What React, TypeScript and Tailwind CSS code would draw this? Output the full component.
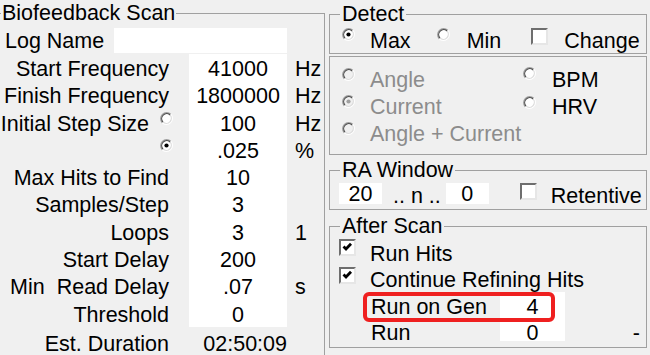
import React from "react";

type RadioProps = { checked?: boolean; disabled?: boolean; className?: string };

function Radio({ checked, disabled, className }: RadioProps) {
  return (
    <svg width="13" height="13" viewBox="0 0 13 13" className={"shrink-0 " + (className ?? "")}>
      <circle cx="6.5" cy="6.5" r="5.8" fill={disabled ? "#f0f0f0" : "#ffffff"} />
      <path d="M2.26 10.74A6 6 0 0 1 10.74 2.26" stroke="#a0a0a0" strokeWidth="1.2" fill="none" />
      <path d="M10.74 2.26A6 6 0 0 1 2.26 10.74" stroke="#ffffff" strokeWidth="1.2" fill="none" />
      <path d="M2.97 10.03A5 5 0 0 1 10.03 2.97" stroke="#505050" strokeWidth="1.2" fill="none" />
      <path d="M10.03 2.97A5 5 0 0 1 2.97 10.03" stroke="#dcdcdc" strokeWidth="1.2" fill="none" />
      {checked && <circle cx="6.5" cy="6.5" r="2.1" fill={disabled ? "#a0a0a0" : "#000000"} />}
    </svg>
  );
}

function Check({ checked, className }: { checked?: boolean; className?: string }) {
  return (
    <div
      className={
        "w-[17px] h-[17px] shrink-0 bg-white border-2 border-t-[#6e6e6e] border-l-[#6e6e6e] border-r-[#e6e6e6] border-b-[#e6e6e6] " +
        (className ?? "")
      }
    >
      {checked && (
        <svg width="13" height="13" viewBox="0 0 13 13">
          <polyline points="2.5,5.5 5,8 10,2.8" stroke="#000" strokeWidth="2.8" fill="none" />
        </svg>
      )}
    </div>
  );
}

interface ScanRow {
  label: string;
  value: string;
  unit?: string;
  radio?: "on" | "off";
}

const scanRows: ScanRow[] = [
  { label: "Start Frequency", value: "41000", unit: "Hz" },
  { label: "Finish Frequency", value: "1800000", unit: "Hz" },
  { label: "Initial Step Size", value: "100", unit: "Hz", radio: "off" },
  { label: "", value: ".025", unit: "%", radio: "on" },
  { label: "Max Hits to Find", value: "10" },
  { label: "Samples/Step", value: "3" },
  { label: "Loops", value: "3", unit: "1" },
  { label: "Start Delay", value: "200" },
  { label: "Min  Read Delay", value: ".07", unit: "s" },
  { label: "Threshold", value: "0" },
];

export default function App() {
  return (
    <div className="w-[650px] h-[355px] overflow-hidden bg-[#f0f0f0] flex items-start text-black text-[21.5px] font-['Liberation_Sans',Arial,sans-serif]">
      {/* Biofeedback Scan group */}
      <fieldset className="-ml-[12px] w-[337px] h-[380px] shrink-0 border border-[#a0a0a0] pl-[11px]">
        <legend className="ml-[1px] px-[1px] leading-[26px]">Biofeedback Scan</legend>
        <div className="pt-[2px]">
          <div className="flex h-[26px] items-start">
            <span className="w-[114px] pl-[5px] leading-[25px] pt-[1px]">Log Name</span>
            <div className="w-[173px] h-[25px] bg-white" />
          </div>

          {scanRows.map((row) => (
            <div key={row.label + row.value} className="flex h-[27.3px] leading-[27.3px]">
              {row.radio ? (
                <div className="w-[176px] flex justify-end items-start pr-[3px] pt-[2px] whitespace-pre">
                  <span>{row.label}</span>
                  <Radio checked={row.radio === "on"} className="ml-[11px] mt-[1px]" />
                </div>
              ) : (
                <div className="w-[176px] text-right pr-[7px] pt-[2px] whitespace-pre">{row.label}</div>
              )}
              <div className="ml-[13px] w-[98px] h-full bg-white text-center pt-[2px]">{row.value}</div>
              <div className="ml-[8px] pt-[2px]">{row.unit}</div>
            </div>
          ))}

          <div className="flex h-[27px] mt-[4px] leading-[27px]">
            <div className="w-[176px] text-right pr-[7px]">Est. Duration</div>
            <div className="ml-[13px] w-[98px] text-right">02:50:09</div>
          </div>
        </div>
      </fieldset>

      {/* Right column */}
      <div className="ml-[4px] w-[318px] shrink-0 flex flex-col">
        <fieldset className="border border-[#a0a0a0] pl-[12px]">
          <legend className="-ml-[2px] px-[2px] leading-[28px]">Detect</legend>
          <div className="flex h-[25px] items-start leading-[25px]">
            <Radio checked />
            <span className="ml-[15px] pt-[1px]">Max</span>
            <Radio className="ml-[26px]" />
            <span className="ml-[17px] pt-[1px]">Min</span>
            <Check className="ml-[30px]" />
            <span className="ml-[16px] pt-[1px]">Change</span>
          </div>
        </fieldset>

        <div className="mt-[2px] border border-[#a0a0a0] pl-[12px] pt-[10px] pb-[6px] grid grid-cols-[181px_1fr] text-[#8c8c8c]">
          <div className="flex h-[27px] items-start leading-[27px]">
            <Radio disabled className="mt-[1px]" />
            <span className="ml-[15px]">Angle</span>
          </div>
          <div className="flex h-[27px] items-start leading-[27px] text-black">
            <Radio className="mt-[0px]" />
            <span className="ml-[16px]">BPM</span>
          </div>
          <div className="flex h-[27px] items-start leading-[27px]">
            <Radio disabled checked className="mt-[1px]" />
            <span className="ml-[15px]">Current</span>
          </div>
          <div className="flex h-[27px] items-start leading-[27px] text-black">
            <Radio className="mt-[2px]" />
            <span className="ml-[16px]">HRV</span>
          </div>
          <div className="flex h-[27px] items-start leading-[27px]">
            <Radio disabled className="mt-[1px]" />
            <span className="ml-[15px]">Angle + Current</span>
          </div>
          <div />
        </div>

        <fieldset className="mt-[2px] border border-[#a0a0a0] pl-[9px] pb-[2px]">
          <legend className="ml-[1px] px-[2px] leading-[26px]">RA Window</legend>
          <div className="flex h-[24px] items-start leading-[24px]">
            <div className="w-[43px] h-[21px] bg-white text-center leading-[23px]">20</div>
            <span className="ml-[11px] pt-[1px]">.. n ..</span>
            <div className="ml-[5px] w-[43px] h-[21px] bg-white text-center leading-[23px]">0</div>
            <Check className="ml-[31px]" />
            <span className="ml-[14px] pt-[1px]">Retentive</span>
          </div>
        </fieldset>

        <fieldset className="mt-[2px] border border-[#a0a0a0] pl-[9px]">
          <legend className="ml-[1px] px-[2px] leading-[28px]">After Scan</legend>
          <div className="flex h-[26px] items-start leading-[26px]">
            <Check checked className="-mt-[1px]" />
            <span className="ml-[14px] pt-[1px]">Run Hits</span>
          </div>
          <div className="flex h-[26px] items-start leading-[26px]">
            <Check checked className="mt-[1px]" />
            <span className="ml-[14px] pt-[1px]">Continue Refining Hits</span>
          </div>
          <div className="relative flex h-[28px] leading-[28px]">
            <span className="w-[161px] pl-[32px] pt-[1px]">Run on Gen</span>
            <div className="w-[65px] bg-white text-center pt-[1px]">4</div>
            <div className="absolute left-[24px] top-0 w-[192px] h-[30px] border-[4px] border-[#ef2020] rounded-[6px]" />
          </div>
          <div className="flex h-[27px] items-start leading-[27px]">
            <span className="w-[161px] pl-[32px]">Run</span>
            <div className="w-[65px] h-[21px] bg-white text-center">0</div>
            <span className="ml-auto pr-[6px]">-</span>
          </div>
        </fieldset>
      </div>
    </div>
  );
}
